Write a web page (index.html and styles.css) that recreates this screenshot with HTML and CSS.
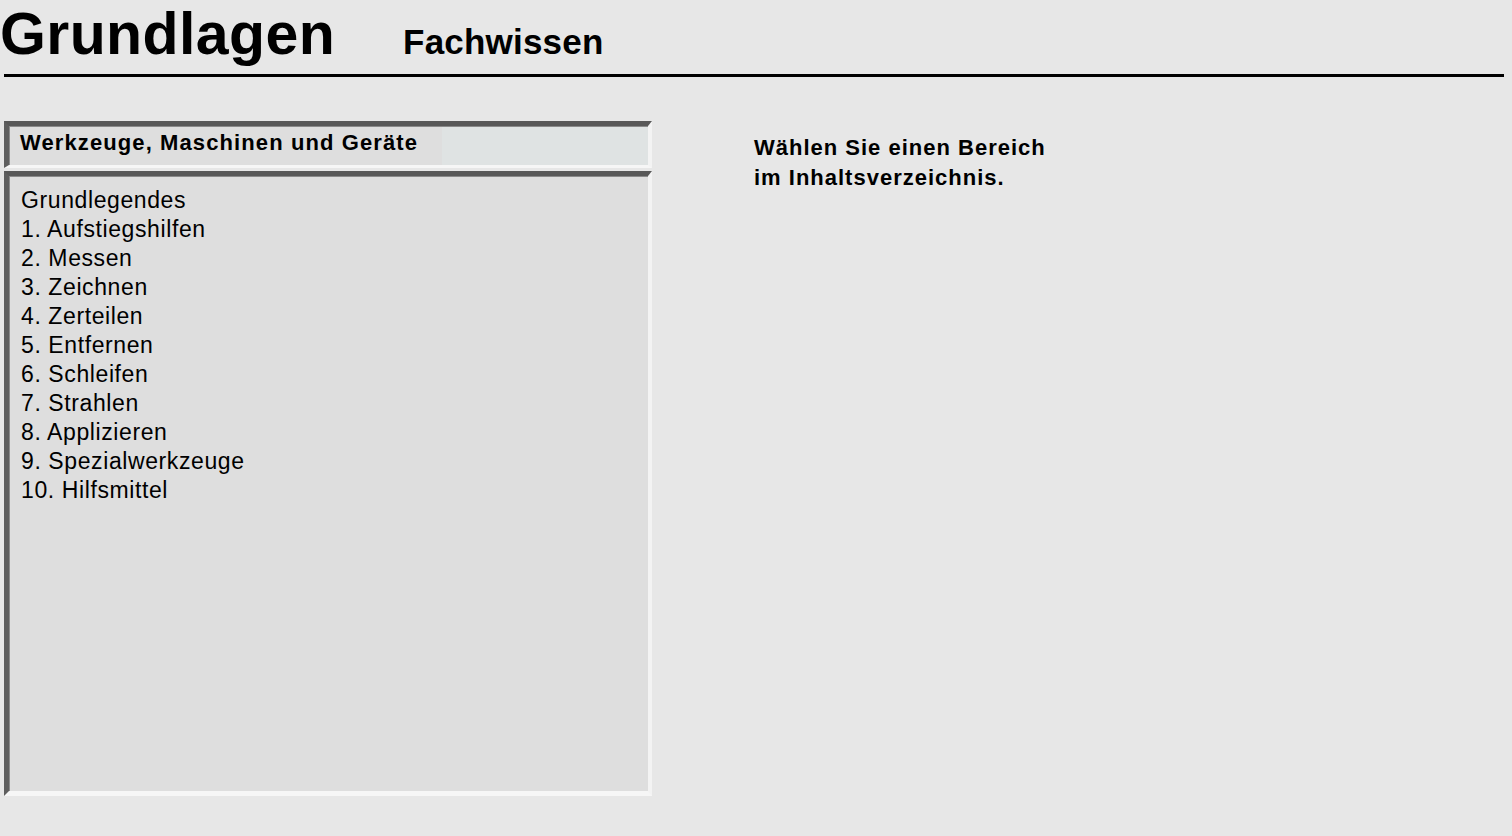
FILE: index.html
```html
<!DOCTYPE html>
<html lang="de">
<head>
<meta charset="utf-8">
<title>Grundlagen – Fachwissen</title>
<link rel="stylesheet" href="styles.css">
</head>
<body>
<header class="top">
  <div class="title-row">
    <h1 class="title">Grundlagen</h1>
    <h2 class="subtitle">Fachwissen</h2>
  </div>
  <div class="rule"></div>
</header>
<main class="main">
  <section class="nav">
    <div class="nav-head">Werkzeuge, Maschinen und Geräte</div>
    <ul class="nav-list">
      <li>Grundlegendes</li>
      <li>1. Aufstiegshilfen</li>
      <li>2. Messen</li>
      <li>3. Zeichnen</li>
      <li>4. Zerteilen</li>
      <li>5. Entfernen</li>
      <li>6. Schleifen</li>
      <li>7. Strahlen</li>
      <li>8. Applizieren</li>
      <li>9. Spezialwerkzeuge</li>
      <li>10. Hilfsmittel</li>
    </ul>
  </section>
  <section class="info">
    <p>Wählen Sie einen Bereich<br>im Inhaltsverzeichnis.</p>
  </section>
</main>
</body>
</html>
```
FILE: styles.css
```css
html, body {
  margin: 0;
  padding: 0;
}
body {
  background: #e7e7e7;
  color: #000;
  font-family: "Liberation Sans", Arial, sans-serif;
  width: 1512px;
  height: 836px;
  overflow: hidden;
}
.title-row {
  display: flex;
  align-items: baseline;
  padding-top: 3px;
  height: 71px;
  box-sizing: border-box;
}
.title {
  margin: 0;
  font-size: 59px;
  font-weight: bold;
  line-height: 62px;
  letter-spacing: 0.4px;
}
.subtitle {
  margin: 0 0 0 68px;
  font-size: 35px;
  font-weight: bold;
  line-height: 40px;
  letter-spacing: 0.2px;
}
.rule {
  height: 3px;
  background: #000;
  margin: 3px 8px 0 4px;
}
.main {
  display: flex;
  align-items: flex-start;
  padding: 44px 0 0 4px;
}
.nav {
  width: 648px;
  display: flex;
  flex-direction: column;
  gap: 3px;
}
.nav-head {
  border-top: 5px solid #585858;
  border-left: 5px solid #5e5e5e;
  border-right: 4px solid #f3f3f3;
  border-bottom: 3px solid #f6f6f6;
  box-shadow: inset 1px 1px 0 #8a8a8a;
  background: linear-gradient(to right, #dedede 0, #dedede 433px, #dfe3e3 433px, #dfe3e3 100%);
  padding: 6px 0 0 11px;
  box-sizing: border-box;
  height: 47px;
  font-size: 22px;
  font-weight: bold;
  line-height: 22px;
  letter-spacing: 1.1px;
  white-space: nowrap;
}
.nav-list {
  list-style: none;
  margin: 0;
  height: 625px;
  box-sizing: border-box;
  border-top: 5px solid #585858;
  border-left: 5px solid #5e5e5e;
  border-right: 4px solid #f3f3f3;
  border-bottom: 5px solid #f6f6f6;
  box-shadow: inset 1px 1px 0 #8a8a8a;
  background: #dedede;
  padding: 10px 0 0 12px;
  font-size: 23px;
  line-height: 29px;
  letter-spacing: 0.6px;
}
.nav-list li {
  margin: 0;
  white-space: nowrap;
}
.info {
  margin-left: 102px;
  padding-top: 12px;
}
.info p {
  margin: 0;
  font-size: 22px;
  font-weight: bold;
  line-height: 30px;
  letter-spacing: 1px;
}
```
